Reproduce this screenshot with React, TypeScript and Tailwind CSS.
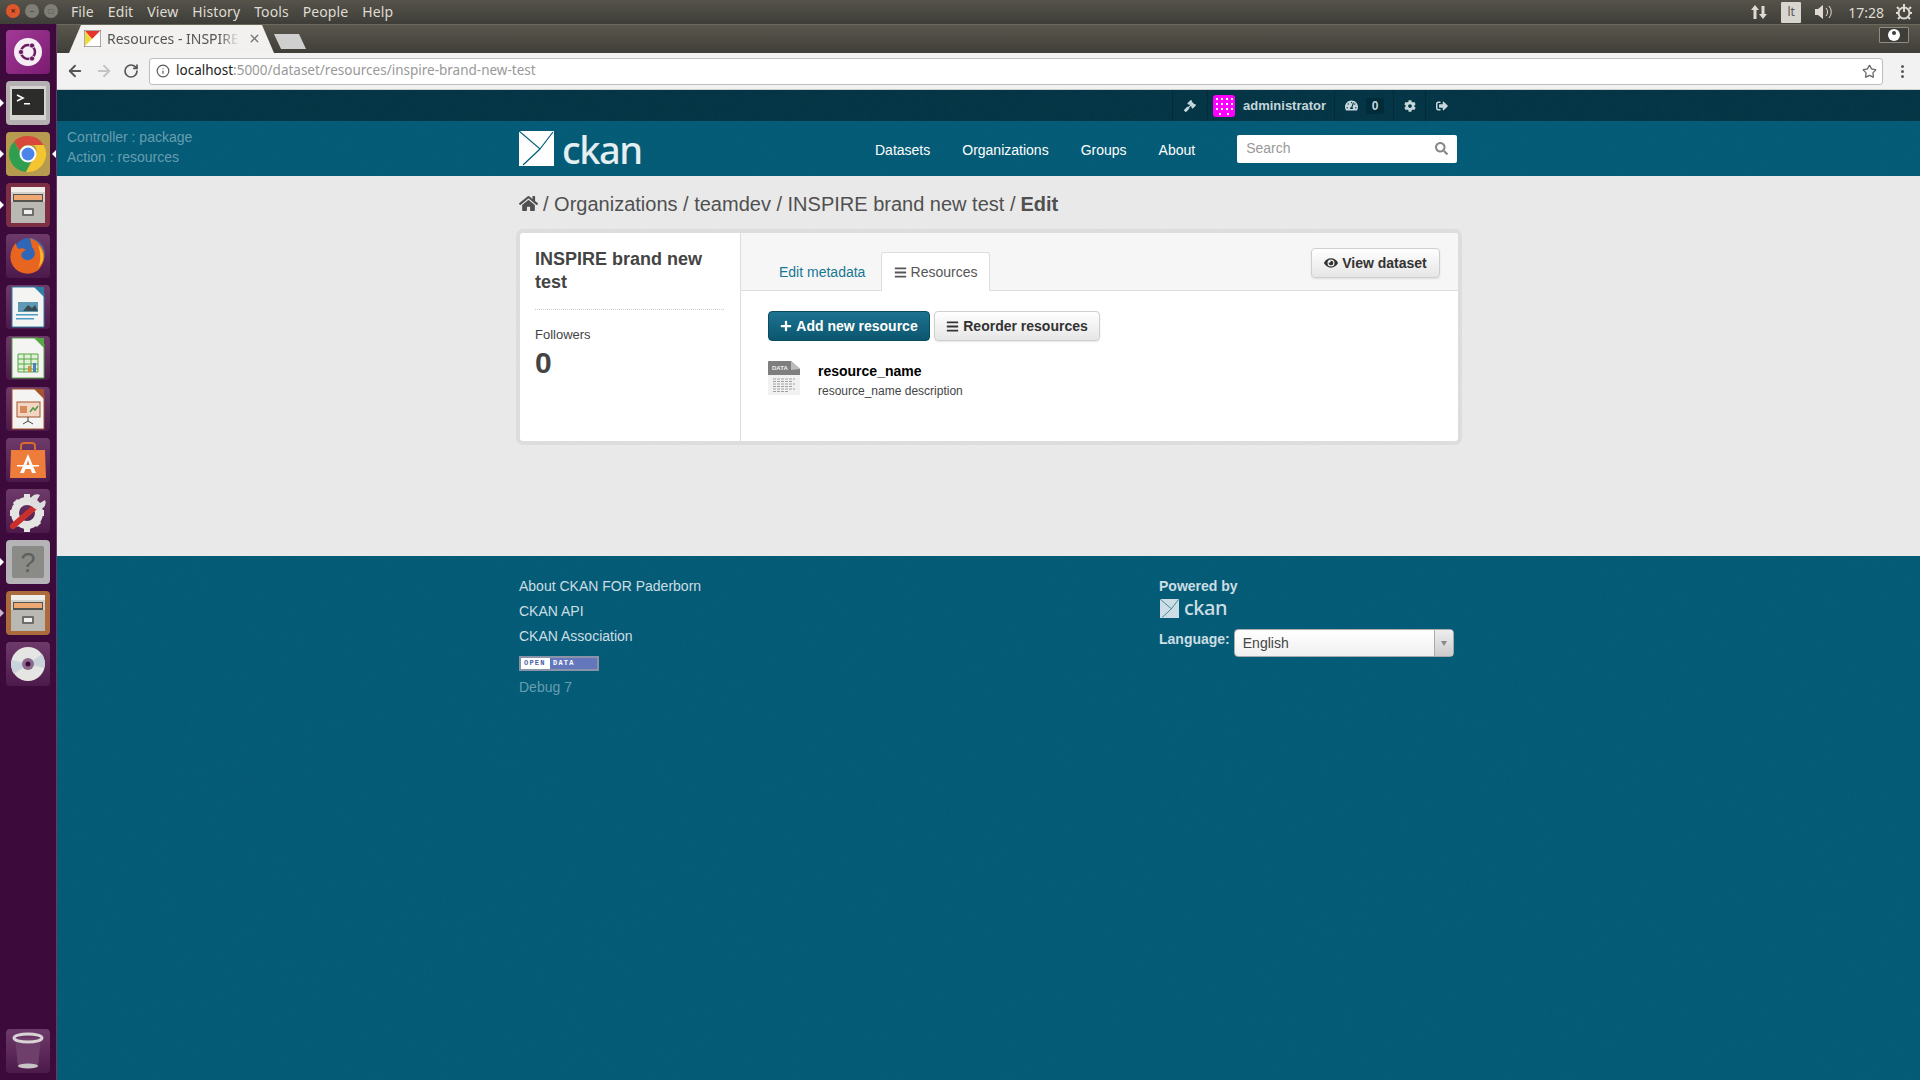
import { ReactNode } from 'react'
import { ArrowLeft, ArrowRight, RotateCw, Info, Star, X } from 'lucide-react'
import { FaHome, FaEye, FaPlus, FaBars, FaSearch, FaGavel, FaTachometerAlt, FaCog, FaSignOutAlt } from 'react-icons/fa'

const UBUNTU = { fontFamily: '"Noto Sans", "Open Sans", sans-serif' }

// fine speckle that the ckan background images have
function Noise({ id, className }: { id: string; className: string }) {
  return (
    <svg className={`pointer-events-none absolute inset-0 -z-10 h-full w-full ${className}`}>
      <filter id={id}>
        <feTurbulence type="fractalNoise" baseFrequency="0.9" numOctaves="2" stitchTiles="stitch" />
        <feColorMatrix type="saturate" values="0" />
      </filter>
      <rect width="100%" height="100%" filter={`url(#${id})`} />
    </svg>
  )
}

function Tile({ bg, pip, pipRight, hollow, children }: { bg: string; pip?: boolean; pipRight?: boolean; hollow?: boolean; children: ReactNode }) {
  return (
    <div className="relative h-[44px] w-full">
      {pip && (
        <div className={`absolute left-0 top-[18px] h-0 w-0 border-y-[4px] border-l-[4px] border-y-transparent ${hollow ? 'border-l-[#c9b8c9]' : 'border-l-white'}`} />
      )}
      {pipRight && (
        <div className="absolute right-0 top-[18px] h-0 w-0 border-y-[4px] border-r-[4px] border-y-transparent border-r-white" />
      )}
      <div className={`ml-[6px] h-[44px] w-[44px] overflow-hidden rounded-[4px] ${bg}`}>
        <svg width="44" height="44" viewBox="0 0 44 44">{children}</svg>
      </div>
    </div>
  )
}

function Cabinet() {
  return (
    <g>
      <rect x="5" y="4" width="34" height="36" rx="2" fill="#d2d0cb" />
      <rect x="5" y="4" width="34" height="5" fill="#efeeea" />
      <rect x="7" y="11" width="30" height="8" fill="#55534f" />
      <rect x="8" y="12" width="28" height="5" fill="#eda873" />
      <rect x="5" y="19" width="34" height="21" fill="#bab8b3" />
      <rect x="16" y="25" width="12" height="8" rx="1" fill="#6d6c68" />
      <rect x="18" y="27" width="8" height="4" fill="#efefef" />
    </g>
  )
}

function Doc({ accent, children }: { accent: string; children: ReactNode }) {
  return (
    <g>
      <path d="M6 2h26l6 6v34H6z" fill="#f4f4f2" stroke={accent} strokeWidth="1" />
      <path d="M28 2h10v10z" fill={accent} />
      {children}
    </g>
  )
}

function Launcher() {
  return (
    <aside className="flex w-[57px] shrink-0 flex-col gap-[7px] border-r border-[#6a3a66] bg-[#3d0a3c] pt-[6px] pb-[7px]">
      <Tile bg="bg-gradient-to-br from-[#a13a96] to-[#7c1a72]">
        <circle cx="22" cy="22" r="14" fill="#f6eef5" />
        <circle cx="22" cy="22" r="7" fill="none" stroke="#6a1b61" strokeWidth="2.500" />
        <circle cx="15" cy="22" r="2.600" fill="#6a1b61" stroke="#f6eef5" strokeWidth="0.800" />
        <circle cx="26" cy="15.500" r="2.600" fill="#6a1b61" stroke="#f6eef5" strokeWidth="0.800" />
        <circle cx="26" cy="28.500" r="2.600" fill="#6a1b61" stroke="#f6eef5" strokeWidth="0.800" />
      </Tile>
      <Tile bg="bg-[#b4b0b2]" pip>
        <rect x="4" y="5" width="36" height="34" fill="#d6d4d0" />
        <rect x="6" y="8" width="32" height="26" fill="#2c2c2a" />
        <path d="M11 14l6 3-6 3" fill="none" stroke="#fff" strokeWidth="1.600" />
        <rect x="18" y="22" width="6" height="1.500" fill="#fff" />
      </Tile>
      <Tile bg="bg-[#b59a4f]" pip pipRight>
        <path d="M22 4a18 18 0 0 1 15.600 9H22a9 9 0 0 0-8.400 5.600L8 9.500A18 18 0 0 1 22 4z" fill="#d8483b" />
        <path d="M8 9.500l7.600 13.500a8 8 0 0 0 9 7L20 39.900A18 18 0 0 1 8 9.500z" fill="#2f9e4f" />
        <path d="M37.600 13A18 18 0 0 1 20 39.900L29 24a8 8 0 0 0-1-11z" fill="#f3c531" />
        <circle cx="22" cy="22" r="8.500" fill="#fff" />
        <circle cx="22" cy="22" r="6.500" fill="#4c84ea" />
      </Tile>
      <Tile bg="bg-[#7d2f45]" pip>
        <Cabinet />
      </Tile>
      <Tile bg="bg-gradient-to-b from-[#6e3a6a] to-[#4c1a4b]">
        <circle cx="23" cy="20" r="16" fill="#2f66b5" />
        <path d="M24 4c7 2 13 8 14 15 1 7-2 14-7 18a18 18 0 0 1-24-5C2 24 5 14 10 9c0 3 1 5 3 6 2-1 5-1 7 1-3 1-6 4-4 7 2 4 8 4 11 1 3-3 2-8-1-11l-2-9z" fill="#e8651f" />
        <path d="M32 11c5 4 7 12 4 18l-4 5c3-7 3-15 0-23z" fill="#f6b62a" />
      </Tile>
      <Tile bg="bg-gradient-to-b from-[#6e3a6a] to-[#4c1a4b]">
        <Doc accent="#2d7fa6">
          <rect x="12" y="17" width="20" height="10" fill="#5f9ab5" />
          <path d="M17 26l5-6 4 3 3-3 3 6z" fill="#3c4a52" />
          <rect x="10" y="29" width="22" height="1.500" fill="#4d9bc2" />
          <rect x="10" y="33" width="18" height="1.500" fill="#4d9bc2" />
        </Doc>
      </Tile>
      <Tile bg="bg-gradient-to-b from-[#6e3a6a] to-[#4c1a4b]">
        <Doc accent="#55a745">
          <path d="M12 18h20v18H12zM12 23h20M12 28h20M12 33h20M18 18v18M25 18v18" fill="#e2f0d8" stroke="#55a745" strokeWidth="1" />
          <rect x="27" y="27" width="3" height="9" fill="#4d7fc2" />
          <rect x="22" y="30" width="3" height="6" fill="#d98a3a" />
        </Doc>
      </Tile>
      <Tile bg="bg-gradient-to-b from-[#6e3a6a] to-[#4c1a4b]">
        <Doc accent="#a5532c">
          <rect x="11" y="15" width="23" height="15" fill="#f2d6c2" stroke="#a5532c" strokeWidth="1" />
          <rect x="14" y="19" width="7" height="7" fill="#d98a5a" />
          <path d="M24 25l3-4 2 2 3-4" fill="none" stroke="#4f9a4a" strokeWidth="1.500" />
          <path d="M22 30v4M22 34l-5 3M22 34l5 3" stroke="#444" strokeWidth="1" />
        </Doc>
      </Tile>
      <Tile bg="bg-gradient-to-b from-[#6e3a6a] to-[#4c1a4b]">
        <path d="M5 12h34l1 28H4z" fill="#ee7c3b" />
        <path d="M15 13V8a3 3 0 0 1 3-3h8a3 3 0 0 1 3 3v5" fill="none" stroke="#d96a30" strokeWidth="2" />
        <path d="M22 16l-8 19h4l1.500-4h5l1.500 4h4zM20.500 27l1.500-5 1.500 5z" fill="#fff" />
        <rect x="11" y="27" width="22" height="1.500" fill="#fff" />
      </Tile>
      <Tile bg="bg-gradient-to-b from-[#6e3a6a] to-[#4c1a4b]">
        <circle cx="21" cy="24" r="12" fill="none" stroke="#e4e4e2" strokeWidth="8" />
        <path d="M21 5v5M21 38v5M4 24h5M33 24h5M9 12l3 3M30 33l3 3M9 36l3-3" stroke="#e4e4e2" strokeWidth="6" />
        <path d="M7 37l22-19" stroke="#c9302c" strokeWidth="6" strokeLinecap="round" />
        <path d="M28 19a7 7 0 0 1 6-13l-3 5 3 3 5-3a7 7 0 0 1-11 8z" fill="#dedede" />
      </Tile>
      <Tile bg="bg-[#b5b3b5]" pip>
        <rect x="6" y="6" width="32" height="32" rx="2" fill="#8a8a87" />
        <text x="22" y="32" textAnchor="middle" fontSize="27" fill="#5f5f5c" fontFamily="Liberation Sans">?</text>
      </Tile>
      <Tile bg="bg-[#ab6b3c]" pip hollow>
        <Cabinet />
      </Tile>
      <Tile bg="bg-gradient-to-b from-[#6e3a6a] to-[#4c1a4b]">
        <circle cx="22" cy="22" r="17" fill="#e5e5e3" />
        <path d="M22 22L36 12a17 17 0 0 1 2 14zM22 22L8 32a17 17 0 0 1-2-14z" fill="#c9d3dc" />
        <circle cx="22" cy="22" r="6" fill="#8c6a8c" />
        <circle cx="22" cy="22" r="2.500" fill="#3d0a3c" />
      </Tile>
      <div className="mt-auto">
        <Tile bg="bg-gradient-to-b from-[#6e3a6a] to-[#4c1a4b]">
          <path d="M9 9h26l-3 29H12z" fill="#6d3f6a" />
          <ellipse cx="22" cy="9" rx="14" ry="4" fill="none" stroke="#d9d4d6" strokeWidth="3" />
          <ellipse cx="22" cy="37" rx="10" ry="2.500" fill="#c8c6c4" />
        </Tile>
      </div>
    </aside>
  )
}

function CkanMark({ size, fill, line }: { size: number; fill: string; line: string }) {
  return (
    <svg width={size} height={size} viewBox="0 0 35 35" className="shrink-0">
      <rect width="35" height="35" fill={fill} />
      <path d="M0 0L21 18L34 1M21 18L4 34" fill="none" stroke={line} strokeWidth="1.200" />
    </svg>
  )
}

function OpenDataBadge() {
  return (
    <div className="flex h-[15px] w-[80px] border-2 border-[#8a93a8] bg-white font-['Liberation_Mono',monospace] text-[7px] font-bold leading-[11px] tracking-[1.200px]">
      <div className="w-[29px] pl-[3px] text-[#4b5eaa]">OPEN</div>
      <div className="flex-1 bg-[#6477bd] pl-[3px] text-white">DATA</div>
    </div>
  )
}

function AccountItem({ children, className }: { children: ReactNode; className?: string }) {
  return <div className={`flex h-full items-center border-l border-[#002b39] ${className ?? ''}`}>{children}</div>
}

function Btn({ children, className }: { children: ReactNode; className?: string }) {
  return (
    <button className={`flex h-[30px] items-center justify-center gap-[4px] rounded-[4px] border border-[#cfcfcf] bg-gradient-to-b from-white to-[#e6e6e6] text-[14px] font-bold text-[#333] shadow-[0_1px_2px_rgba(0,0,0,.1)] ${className ?? ''}`}>
      {children}
    </button>
  )
}

export default function App() {
  return (
    <div className="flex h-[1080px] w-[1920px] flex-col overflow-hidden bg-[#005d7a] font-['Liberation_Sans',Arial,sans-serif]">
      {/* ubuntu panel */}
      <div className="flex h-[24px] shrink-0 items-center bg-gradient-to-b from-[#55534a] to-[#3e3d38] pb-[2px] text-[14px] text-[#dfdbd2]" style={UBUNTU}>
        <div className="ml-[6px] flex w-[65px] gap-[5px]">
          <div className="h-[14px] w-[14px] rounded-full bg-[#e2562c] text-center text-[9px] font-bold leading-[14px] text-[#4a2a1a]">×</div>
          <div className="h-[14px] w-[14px] rounded-full bg-[#7e7d76] text-center text-[9px] leading-[13px] text-[#3e3d38]">–</div>
          <div className="h-[14px] w-[14px] rounded-full bg-[#7e7d76] text-center text-[8px] leading-[13px] text-[#3e3d38]">□</div>
        </div>
        <div className="flex gap-[14px] tracking-[0.1px]">
          <span>File</span>
          <span>Edit</span>
          <span>View</span>
          <span>History</span>
          <span>Tools</span>
          <span>People</span>
          <span>Help</span>
        </div>
        <div className="ml-auto flex items-center pt-[2px]">
          <svg width="18" height="18" viewBox="0 0 18 18" className="mr-[13px]">
            <path d="M5 2L1 7h2.500v9h3V7H9zM13 16l4-5h-2.500V3h-3v8H9z" fill="#dfdbd2" />
          </svg>
          <div className="flex h-[21px] w-[20px] items-center justify-center rounded-[1px] bg-[#d8d5cf] text-[12px] text-[#555]">lt</div>
          <svg width="20" height="18" viewBox="0 0 20 18" className="ml-[13px] mr-[14px]">
            <path d="M1 6h3l5-4v14l-5-4H1z" fill="#dfdbd2" />
            <path d="M12 5a6 6 0 0 1 0 8M15 3a9 9 0 0 1 0 12" fill="none" stroke="#dfdbd2" strokeWidth="1" />
          </svg>
          <span className="text-[14px]">17:28</span>
          <svg width="18" height="20" viewBox="0 0 18 20" className="ml-[11px] mr-[7px]">
            <circle cx="9" cy="11" r="5.500" fill="none" stroke="#dfdbd2" strokeWidth="2" />
            <path d="M9 2v8M2 5l2 2M16 5l-2 2M1 11h2M15 11h2M3 17l2-2M15 17l-2-2" stroke="#dfdbd2" strokeWidth="2" />
          </svg>
        </div>
      </div>

      <div className="flex min-h-0 flex-1">
        <Launcher />
        <div className="flex min-w-0 flex-1 flex-col">
          {/* chrome tabs */}
          <div className="flex h-[29px] shrink-0 items-end border-t border-[#6b685e] bg-gradient-to-b from-[#5a574d] to-[#403e39] pl-[12px]">
            <div className="flex h-[28px] w-[205px] items-center bg-[#f2f1f0] pb-[2px] pl-[15px] pr-[13px] [clip-path:polygon(12px_0,193px_0,205px_100%,0_100%)]" style={UBUNTU}>
              <svg width="17" height="17" viewBox="0 0 17 17" className="shrink-0">
                <rect width="17" height="17" fill="#fff" stroke="#555" />
                <path d="M1 1h15L8 9z" fill="#e8342b" />
                <path d="M1 1v15l7-7z" fill="#f0d93a" />
              </svg>
              <span className="ml-[6px] text-[14px] whitespace-nowrap text-[#555] [mask-image:linear-gradient(to_right,black_85%,transparent)]">Resources - INSPIRE</span>
              <X size={13} strokeWidth={2.500} className="ml-auto text-[#777]" />
            </div>
            <div className="mb-[4px] h-[15px] w-[32px] bg-[#cfcfcf] [clip-path:polygon(0_0,25px_0,32px_100%,7px_100%)]" />
            <div className="mb-[10px] ml-auto mr-[11px] flex h-[16px] w-[30px] items-center justify-center rounded-[1px] border border-[#8e8c85] bg-[#3f3d38]">
              <div className="flex h-[12px] w-[12px] items-start justify-center rounded-full bg-white pt-[2px]">
                <div className="h-[4px] w-[4px] rounded-full bg-[#3f3d38]" />
              </div>
            </div>
          </div>
          {/* chrome toolbar */}
          <div className="flex h-[37px] shrink-0 items-center border-b border-[#cfcfcf] bg-[#f2f2f2] pl-[9px]">
            <ArrowLeft size={18} strokeWidth={2.500} className="text-[#555]" />
            <ArrowRight size={18} strokeWidth={2.500} className="ml-[11px] text-[#c4c4c4]" />
            <RotateCw size={16} strokeWidth={2.500} className="ml-[10px] text-[#555]" />
            <div className="ml-[10px] flex h-[27px] w-[1734px] items-center rounded-[3px] border border-[#bdbdbd] bg-white pl-[6px] text-[13.500px]" style={UBUNTU}>
              <Info size={14} className="text-[#5a5a5a]" />
              <span className="ml-[6px] pb-[2px] text-[#222]">localhost</span>
              <span className="pb-[2px] text-[#999]">:5000/dataset/resources/inspire-brand-new-test</span>
              <Star size={15} className="ml-auto mr-[5px] text-[#666]" />
            </div>
            <div className="ml-[18px] flex flex-col gap-[2px]">
              <div className="h-[3px] w-[3px] rounded-full bg-[#5a5a5a]" />
              <div className="h-[3px] w-[3px] rounded-full bg-[#5a5a5a]" />
              <div className="h-[3px] w-[3px] rounded-full bg-[#5a5a5a]" />
            </div>
          </div>

          {/* account bar */}
          <div className="relative isolate flex h-[31px] shrink-0 items-center justify-end bg-[#003243] pr-[462px] text-[13px] text-[#c6d7db]">
            <Noise id="n1" className="opacity-[.05]" />
            <AccountItem className="w-[35px] justify-center">
              <FaGavel size={12} />
            </AccountItem>
            <AccountItem className="w-[127px] pl-[5px]">
              <svg width="22" height="22" viewBox="0 0 22 22" className="rounded-[3px]">
                <rect width="22" height="22" fill="#f0f" />
                <path d="M3 3h2v2H3zM8 3h2v2H8zM13 3h2v2h-2zM18 3h2v2h-2zM3 8h2v2H3zM8 8h2v2H8zM13 8h2v2h-2zM18 8h2v2h-2zM3 13h2v2H3zM8 13h2v2H8zM13 13h2v2h-2zM18 13h2v2h-2zM6 18h2v2H6zM14 18h2v2h-2z" fill="#fff" />
              </svg>
              <span className="ml-[8px] font-bold">administrator</span>
            </AccountItem>
            <AccountItem className="w-[59px] pl-[10px]">
              <FaTachometerAlt size={13} />
              <span className="ml-[8px] flex h-[16px] w-[18px] items-center justify-center rounded-[3px] bg-[#002b39] text-[12px] font-bold">0</span>
            </AccountItem>
            <AccountItem className="w-[32px] justify-center">
              <FaCog size={12} />
            </AccountItem>
            <AccountItem className="w-[33px] justify-center">
              <FaSignOutAlt size={12} />
            </AccountItem>
          </div>

          {/* masthead */}
          <div className="relative isolate flex h-[55px] shrink-0 items-center bg-[#005975]">
            <Noise id="n2" className="opacity-[.05]" />
            <div className="w-[462px] pb-[3px] pl-[10px] text-[14px] leading-[20px] text-[#669eb0]">
              <div>Controller : package</div>
              <div>Action : resources</div>
            </div>
            <div className="flex items-center">
              <CkanMark size={35} fill="#fff" line="#005d7a" />
              <span className="ml-[8px] w-[80px] text-[38px] leading-[40px] font-medium tracking-[-1.500px] text-[#e5eef1]" style={{ fontFamily: '"Noto Sans", sans-serif' }}>ckan</span>
            </div>
            <nav className="ml-[233px] flex gap-[32px] pt-[3px] text-[14px] text-white">
              <span>Datasets</span>
              <span>Organizations</span>
              <span>Groups</span>
              <span>About</span>
            </nav>
            <div className="ml-[42px] flex h-[28px] w-[220px] items-center rounded-[2px] bg-white pl-[9px] pr-[9px] text-[14px] text-[#999]">
              Search
              <FaSearch size={13} className="ml-auto text-[#888]" />
            </div>
          </div>

          {/* main */}
          <main className="relative isolate h-[380px] shrink-0 bg-[#eaeaea] pl-[462px]">
            <Noise id="n3" className="opacity-[.04]" />
            <div className="flex h-[57px] items-center pb-[2px] text-[20px] text-[#505050]">
              <FaHome size={19} />
              <span className="ml-[5px]">/ Organizations / teamdev / INSPIRE brand new test / </span>
              <span className="ml-[5px] font-bold">Edit</span>
            </div>
            <div className="flex h-[208px] w-[938px] overflow-hidden rounded-[3px] bg-white shadow-[0_0_0_4px_rgba(0,0,0,.05)] ml-[1px]">
              <div className="w-[221px] shrink-0 border-r border-[#ddd] pl-[15px] pr-[16px] pt-[15px]">
                <h1 className="border-b border-dotted border-[#ccc] pb-[16px] text-[18px] leading-[22.500px] font-bold text-[#444]">INSPIRE brand new test</h1>
                <div className="mt-[15px] text-[13px] leading-[20px] text-[#444]">Followers</div>
                <div className="text-[30px] leading-[36px] font-bold text-[#444]">0</div>
              </div>
              <div className="flex min-w-0 flex-1 flex-col">
                <div className="flex h-[58px] shrink-0 items-end border-b border-[#ddd] bg-[#f6f6f6] pl-[27px]">
                  <div className="flex h-[38px] w-[113px] items-center pl-[11px] pt-[2px] text-[14px] text-[#187794]">Edit metadata</div>
                  <div className="-mb-[1px] flex h-[39px] w-[109px] items-center justify-center gap-[4px] rounded-t-[3px] border border-b-0 border-[#ddd] bg-white text-[14px] text-[#555]">
                    <FaBars size={13} />
                    Resources
                  </div>
                  <Btn className="mb-[12px] ml-auto mr-[18px] w-[129px]">
                    <FaEye size={14} />
                    View dataset
                  </Btn>
                </div>
                <div className="px-[27px] pt-[20px]">
                  <div className="flex gap-[4px]">
                    <button className="flex h-[30px] w-[162px] items-center justify-center gap-[4px] rounded-[4px] border border-[#0b4a5f] bg-gradient-to-b from-[#1d7391] to-[#0b566f] text-[14px] font-bold text-white">
                      <FaPlus size={12} />
                      Add new resource
                    </button>
                    <Btn className="w-[166px]">
                      <FaBars size={13} />
                      Reorder resources
                    </Btn>
                  </div>
                  <div className="mt-[20px] flex">
                    <svg width="32" height="34" viewBox="0 0 32 34" className="shrink-0">
                      <path d="M1 0h22l9 8v25a1 1 0 0 1-1 1H1a1 1 0 0 1-1-1V1a1 1 0 0 1 1-1z" fill="#f1f1f1" />
                      <path d="M1 0h22l9 8v6H0V1a1 1 0 0 1 1-1z" fill="#7e7e7e" />
                      <path d="M23 0l9 8-9 1z" fill="#bcbcbc" />
                      <path d="M5 18h22M5 20.500h20M5 23h22M5 25.500h19M5 28h22M5 30.500h16" stroke="#a0a0a0" strokeWidth="1" strokeDasharray="3 1" />
                      <text x="4" y="9" fontSize="6" fontWeight="700" fill="#eee" fontFamily="Liberation Sans">DATA</text>
                    </svg>
                    <div className="ml-[18px]">
                      <div className="text-[14px] leading-[20px] font-bold text-black">resource_name</div>
                      <div className="mt-[1px] text-[12px] leading-[18px] text-[#444]">resource_name description</div>
                    </div>
                  </div>
                </div>
              </div>
            </div>
          </main>

          {/* footer */}
          <footer className="relative isolate flex min-h-0 flex-1 bg-[#005975] pl-[462px] pt-[20px] text-[14px] text-[#ccdee3]">
            <Noise id="n4" className="opacity-[.05]" />
            <div className="w-[640px]">
              <div className="leading-[20px]">About CKAN FOR Paderborn</div>
              <div className="mt-[5px] leading-[20px]">CKAN API</div>
              <div className="mt-[5px] leading-[20px]">CKAN Association</div>
              <div className="mt-[10px]"><OpenDataBadge /></div>
              <div className="mt-[6px] leading-[20px] text-[#669eb0]">Debug 7</div>
            </div>
            <div className="w-[296px]">
              <div className="leading-[20px] font-bold">Powered by</div>
              <div className="mt-[2px] flex h-[20px] items-center">
                <span className="ml-[1px]"><CkanMark size={19} fill="#ccdee3" line="#005d7a" /></span>
                <span className="ml-[5px] text-[20px] leading-[20px] font-medium tracking-[-0.500px]" style={{ fontFamily: '"Noto Sans", sans-serif' }}>ckan</span>
              </div>
              <div className="mt-[11px] flex items-start">
                <span className="font-bold leading-[20px]">Language:</span>
                <div className="ml-[4px] flex h-[28px] w-[220px] items-stretch overflow-hidden rounded-[4px] border border-[#aaa] bg-gradient-to-b from-white to-[#f0f0f0] text-[14px] text-[#444]">
                  <span className="flex flex-1 items-center pl-[8px]">English</span>
                  <div className="flex w-[19px] items-center justify-center border-l border-[#aaa] bg-gradient-to-b from-[#eee] to-[#ccc]">
                    <div className="h-0 w-0 border-x-[3px] border-t-[5px] border-x-transparent border-t-[#888]" />
                  </div>
                </div>
              </div>
            </div>
          </footer>
        </div>
      </div>
    </div>
  )
}
